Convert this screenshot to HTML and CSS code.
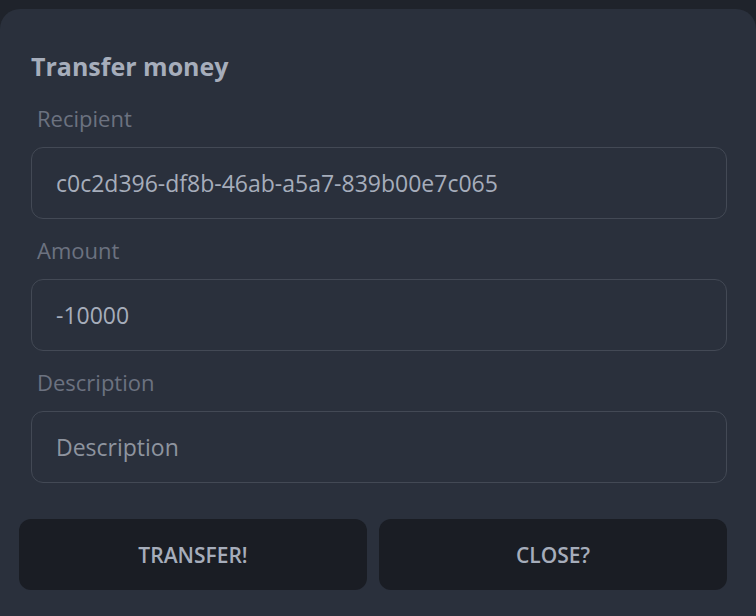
FILE: index.html
```html
<!DOCTYPE html>
<html lang="en">
<head>
<meta charset="utf-8">
<title>Transfer money</title>
<link rel="stylesheet" href="styles.css">
</head>
<body>
<div class="backdrop">
  <div class="modal">
    <form class="form">
      <h3 class="title">Transfer money</h3>
      <label class="label" for="recipient"><span>Recipient</span></label>
      <input id="recipient" class="input" type="text" value="c0c2d396-df8b-46ab-a5a7-839b00e7c065">
      <label class="label" for="amount"><span>Amount</span></label>
      <input id="amount" class="input" type="text" value="-10000">
      <label class="label" for="description"><span>Description</span></label>
      <input id="description" class="input" type="text" placeholder="Description">
    </form>
    <div class="actions">
      <button class="btn" type="button">Transfer!</button>
      <button class="btn" type="button">Close?</button>
    </div>
  </div>
</div>
</body>
</html>
```

FILE: styles.css
```css
* { box-sizing: border-box; }

html, body {
  margin: 0;
  height: 100%;
  overflow: hidden;
}

body {
  background: #1f232b;
  font-family: "Open Sans", "Noto Sans", "Liberation Sans", sans-serif;
  color: #a6adbb;
}

.backdrop {
  padding-top: 9px;
  height: 100%;
}

.modal {
  background: #2a303c;
  border-radius: 20px 20px 0 0;
  height: 100%;
  padding: 36px 29px 0 19px;
}

.form {
  display: flex;
  flex-direction: column;
  padding-left: 12px;
}

.title {
  margin: 0;
  font-size: 25px;
  font-weight: 700;
  line-height: 42px;
  color: #a6adbb;
}

.label {
  display: flex;
  padding: 16px 6px 14px;
  font-size: 22px;
  line-height: 30px;
  color: #6c7280;
}

.input {
  height: 72px;
  width: 100%;
  padding: 0 24px;
  border: 1px solid #434955;
  border-radius: 12px;
  background: #2a303c;
  color: #a6adbb;
  font-family: inherit;
  font-size: 23px;
  outline: none;
}

.input::placeholder {
  color: #8e949f;
  opacity: 1;
}

.actions {
  display: flex;
  gap: 12px;
  margin-top: 36px;
}

.btn {
  flex: 1;
  height: 71px;
  border: none;
  border-radius: 12px;
  background: #1a1d24;
  color: #a6adbb;
  font-family: inherit;
  font-size: 21px;
  font-weight: 600;
  text-transform: uppercase;
  cursor: pointer;
}
```
